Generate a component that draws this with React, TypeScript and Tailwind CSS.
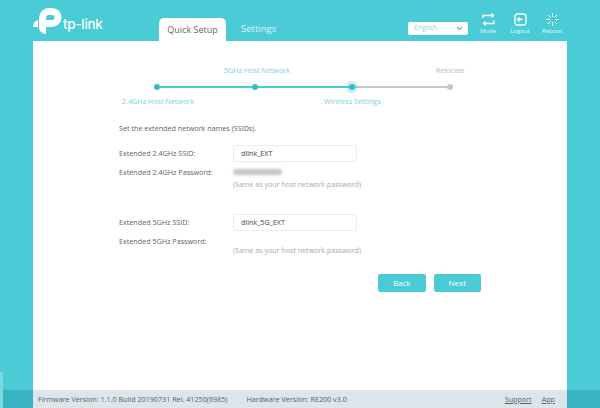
import React from "react";

function Logo() {
  return (
    <svg width="29" height="26" viewBox="0 0 29 26" className="shrink-0">
      <path d="M6 10A10 10 0 0 1 16 0h3a9.500 9.500 0 0 1 0 19h-6v-7h6a2.500 2.500 0 0 0 0-5h-3a3 3 0 0 0-3 3v16a7 7 0 0 1-7-7zM0 19a7 7 0 0 1 5-7v7z" fill="#fff" />
    </svg>
  );
}

function TopIcon({ label, children }: { label: string; children: React.ReactNode }) {
  return (
    <div className="flex w-[32px] flex-col items-center">
      <svg width="13" height="13" viewBox="0 0 13 13" fill="none" stroke="#fff" strokeWidth="1.300">
        {children}
      </svg>
      <span className="mt-[1px] text-[6px] leading-[8px] text-white/85">{label}</span>
    </div>
  );
}

function Step({ active, current }: { active?: boolean; current?: boolean }) {
  return (
    <div className="relative flex h-[6px] w-[6px] shrink-0 items-center justify-center">
      {current && <div className="absolute h-[12px] w-[12px] rounded-full bg-[#4acbd6]/30" />}
      <div className={`relative h-[6px] w-[6px] rounded-full ${active ? "bg-[#35bcc8]" : "bg-[#c4c4c4]"}`} />
    </div>
  );
}

function Field({ label, value }: { label: string; value: string }) {
  return (
    <div className="flex h-[17px] items-center">
      <span className="w-[114px] text-[#5f5f5f]">{label}</span>
      <div className="flex h-[17px] w-[124px] items-center rounded-[2px] border border-[#e8eef0] pl-[7px] text-[#444]">{value}</div>
    </div>
  );
}

function PasswordRow({ label, blurred }: { label: string; blurred?: boolean }) {
  return (
    <div className="mt-[3px] flex h-[14px] items-center">
      <span className="w-[114px] text-[#5f5f5f]">{label}</span>
      {blurred && <div className="h-[6px] w-[49px] rounded-sm bg-[#c0c4c6] blur-[1.5px]" />}
    </div>
  );
}

export default function App() {
  return (
    <div className="relative flex h-[408px] w-[600px] flex-col overflow-hidden bg-[#4acbd6] font-['Open_Sans','DejaVu_Sans',sans-serif] text-[7.2px]">
      <header className="flex h-[41px] shrink-0 px-[33px]">
        <div className="flex w-[126px] shrink-0 items-start pt-[8px]">
          <Logo />
          <span className="ml-[1px] mt-[8px] font-['Inter',sans-serif] text-[13.5px] leading-[16px] font-medium tracking-[-0.3px] text-white">tp-link</span>
        </div>
        <div className="mt-[18px] flex h-[23px] w-[67px] shrink-0 items-center justify-center rounded-t-[5px] bg-white text-[9px] text-[#666]">Quick Setup</div>
        <div className="mt-[18px] flex h-[23px] w-[51px] shrink-0 items-center pl-[15px] text-[9.5px] text-white/80">Settings</div>
        <div className="ml-[131px] mt-[22px] flex h-[13px] w-[60px] shrink-0 items-center justify-between rounded-[2px] bg-white pl-[6px] pr-[5px] text-[7px] text-[#9ad4d8]">
          <span>English</span>
          <svg width="7" height="5" viewBox="0 0 7 5" fill="none" stroke="#7fb5ba" strokeWidth="1.500"><path d="M1 1l2.500 2.500L6 1" /></svg>
        </div>
        <div className="ml-[4px] mt-[13px] flex shrink-0">
          <TopIcon label="Mode">
            <path d="M1 5V2.500h10.500M9.500 0.500l2 2-2 2M12 7.500v3H1.500M3.500 8.500l-2 2 2 2" />
          </TopIcon>
          <TopIcon label="Logout">
            <rect x="1" y="1" width="11" height="11" rx="2.500" />
            <path d="M8.500 6.500H3.500M5.500 4.500l-2 2 2 2" />
          </TopIcon>
          <TopIcon label="Reboot">
            <path d="M6.500 0v4M6.500 9v4M0 6.500h4M9 6.500h4M2 2l2.500 2.500M8.500 8.500L11 11M11 2L8.500 4.500M4.500 8.500L2 11" strokeWidth="1" />
          </TopIcon>
        </div>
      </header>

      <main className="mx-[33px] flex-1 bg-white px-[86px] pt-[23px]">
        <div className="flex h-[12px] items-center whitespace-nowrap text-[#7dd0d8]">
          <span className="ml-[105px] w-[212px]">5GHz Host Network</span>
          <span className="text-[#bbb]">Relocate</span>
        </div>
        <div className="mt-[5px] flex h-[12px] items-center pl-[35px]">
          <Step active />
          <div className="h-[2px] w-[91.5px] bg-[#4acbd6]" />
          <Step active />
          <div className="h-[2px] w-[91.5px] bg-[#4acbd6]" />
          <Step active current />
          <div className="h-[2px] w-[91.5px] bg-[#c8c8c8]" />
          <Step />
        </div>
        <div className="mt-[2px] flex h-[12px] items-center whitespace-nowrap text-[#7dd0d8]">
          <span className="ml-[3px] w-[202px]">2.4GHz Host Network</span>
          <span>Wireless Settings</span>
        </div>
        <p className="mt-[15px] leading-[12px] text-[#5f5f5f]">Set the extended network names (SSIDs).</p>
        <div className="mt-[11px]">
          <Field label="Extended 2.4GHz SSID:" value="dlink_EXT" />
          <PasswordRow label="Extended 2.4GHz Password:" blurred />
          <p className="ml-[114px] mt-[-1px] text-[7.1px] leading-[12px] text-[#aaa]">(Same as your host network password)</p>
        </div>
        <div className="mt-[24px]">
          <Field label="Extended 5GHz SSID:" value="dlink_5G_EXT" />
          <PasswordRow label="Extended 5GHz Password:" />
          <p className="ml-[114px] mt-[-4px] text-[7.1px] leading-[12px] text-[#aaa]">(Same as your host network password)</p>
        </div>
        <div className="ml-[259px] mt-[18px] flex gap-[8px]">
          <button className="h-[18px] w-[48px] rounded-[2px] bg-[#4acbd6] text-[8px] text-white">Back</button>
          <button className="h-[18px] w-[48px] rounded-[2px] bg-[#4acbd6] text-[8px] text-white">Next</button>
        </div>
      </main>

      <footer className="flex h-[18px] shrink-0 bg-[#39b3c2] px-[33px]">
        <div className="flex flex-1 items-center justify-between bg-[#dbe5ea] pl-[5px] pr-[12px] text-[#5f5f5f]">
          <div className="flex gap-[19px]">
            <span>Firmware Version: 1.1.0 Build 20190731 Rel. 41250(6985)</span>
            <span>Hardware Version: RE200 v3.0</span>
          </div>
          <div className="flex gap-[10px] underline">
            <span>Support</span>
            <span>App</span>
          </div>
        </div>
      </footer>
      <div className="absolute bottom-0 left-0 h-[36px] w-[3px] bg-[#7bd8e0]" />
    </div>
  );
}
